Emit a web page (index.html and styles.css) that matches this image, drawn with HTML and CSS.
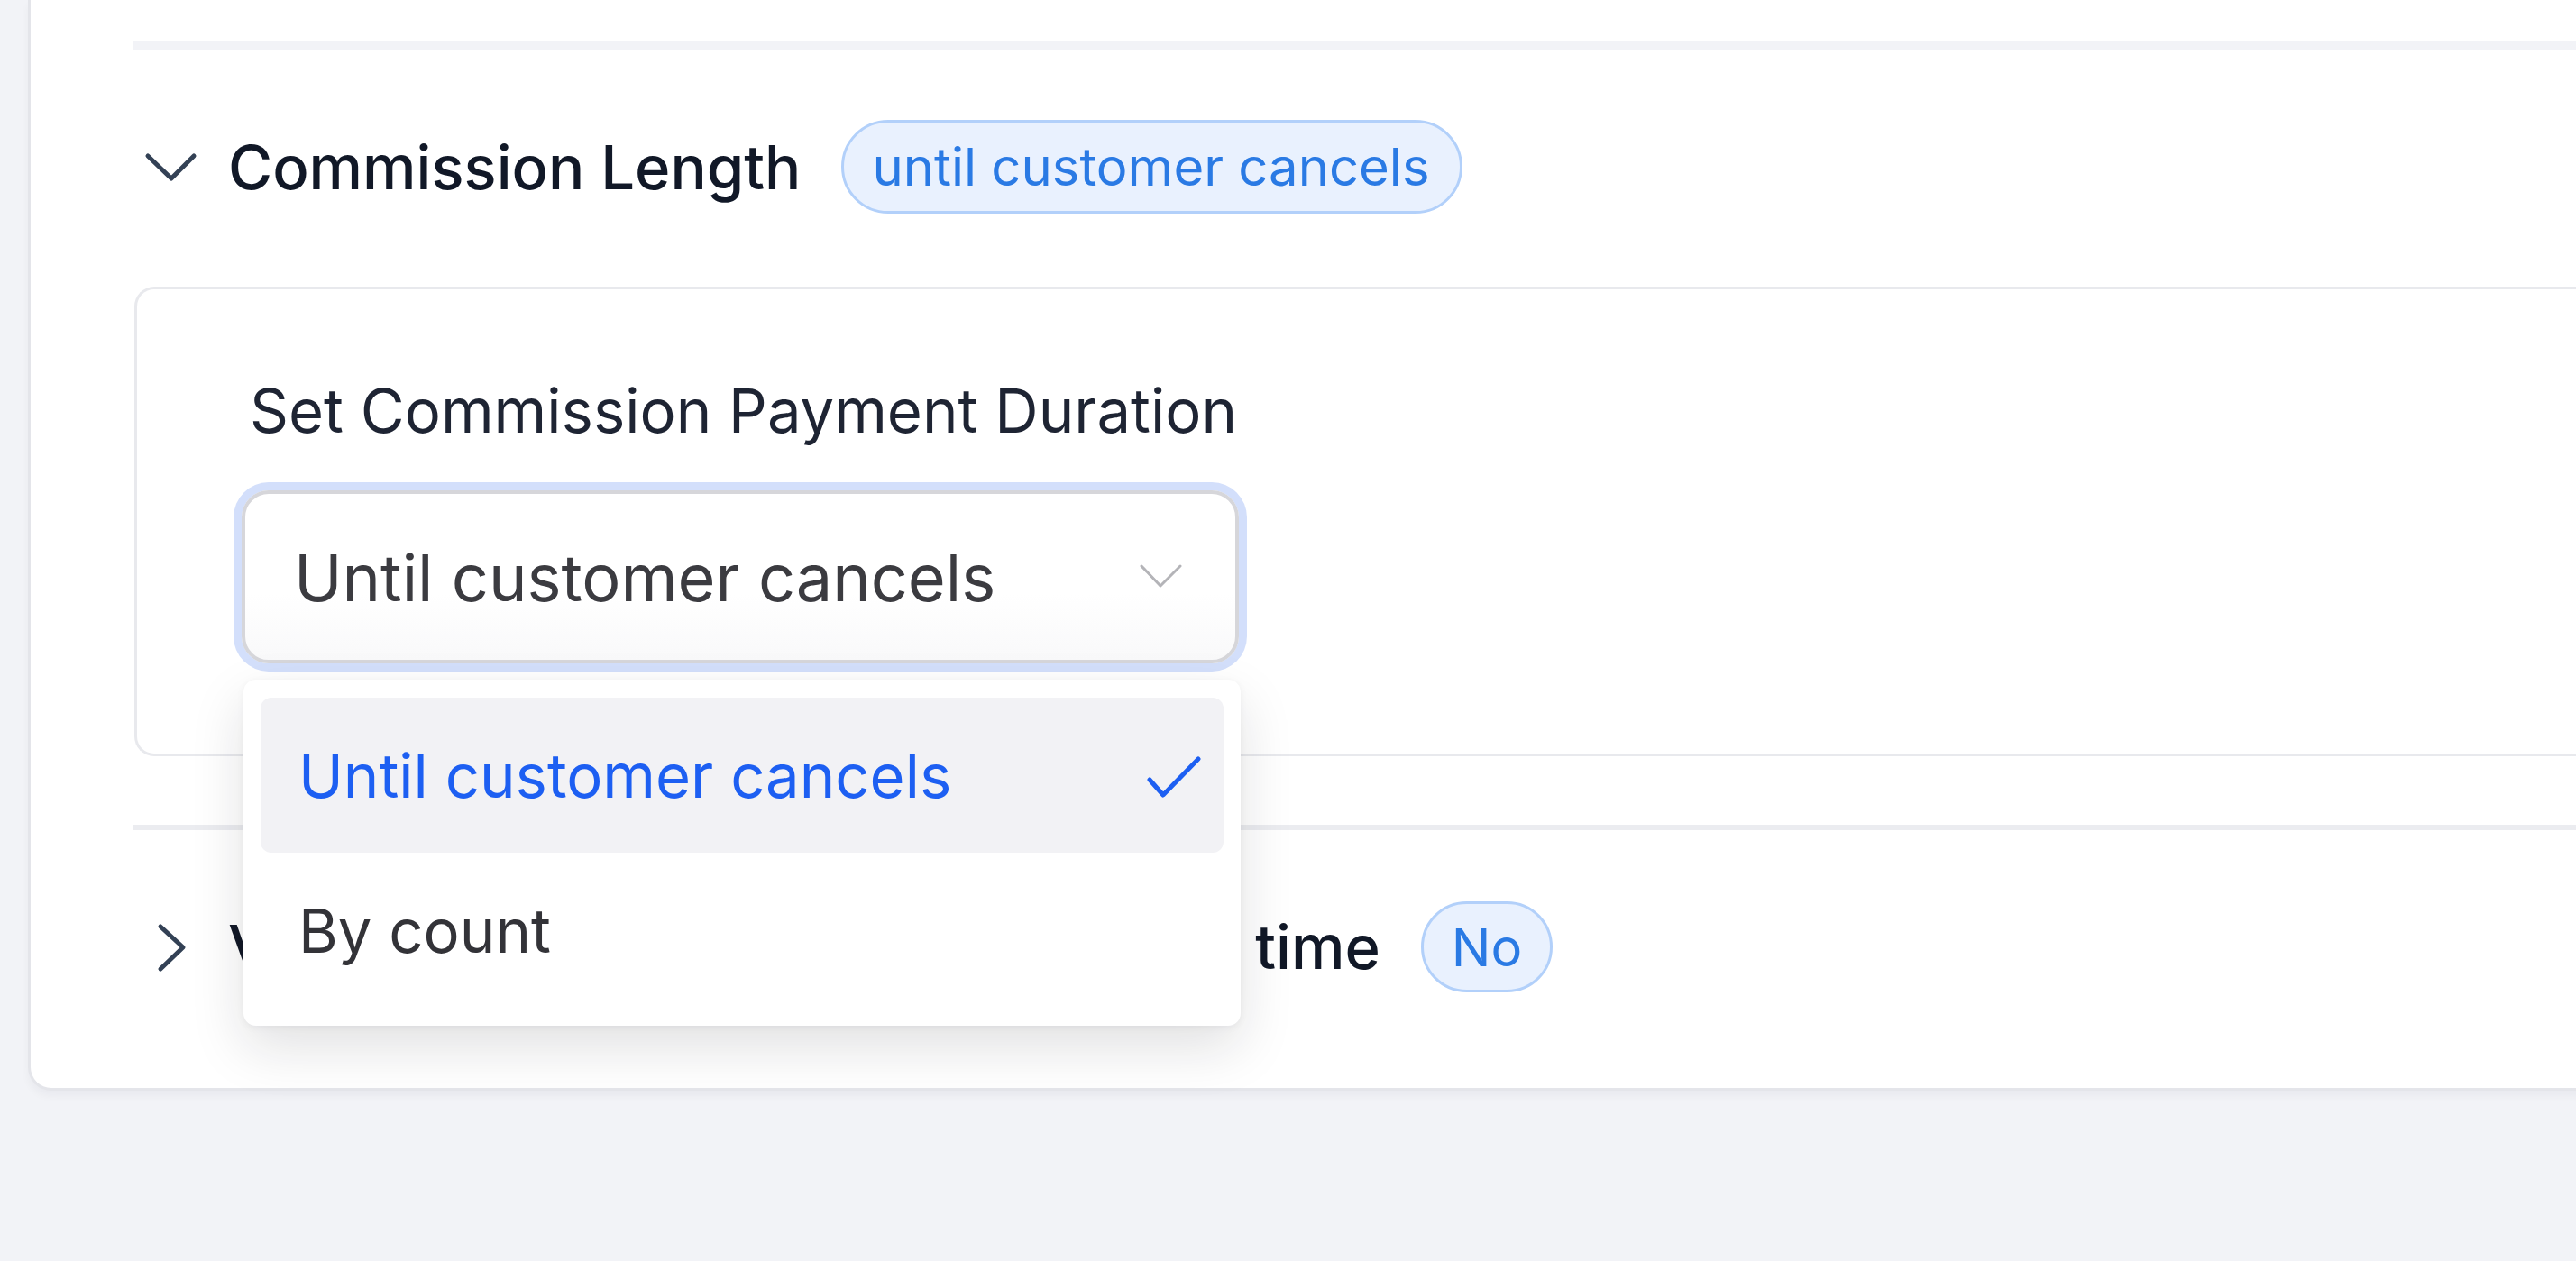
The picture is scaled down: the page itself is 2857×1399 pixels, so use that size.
FILE: index.html
```html
<!DOCTYPE html>
<html lang="en">
<head>
<meta charset="utf-8">
<title>Commission Length</title>
<link rel="stylesheet" href="styles.css">
</head>
<body>
<div class="page">
  <div class="card">
    <div class="divider divider-top"></div>

    <div class="row row-open">
      <span class="chev">
        <svg width="64" height="64" viewBox="0 0 64 64"><path d="M6 20 L32 45 L57 20" fill="none" stroke="#334155" stroke-width="5" stroke-linecap="round" stroke-linejoin="round"/></svg>
      </span>
      <span class="row-title">Commission Length</span>
      <span class="pill pill-long">until customer cancels</span>
    </div>

    <div class="panel">
      <div class="field-label">Set Commission Payment Duration</div>
      <div class="select-wrap">
        <div class="select">
          <span class="select-value">Until customer cancels</span>
          <svg class="select-chev" width="48" height="30" viewBox="0 0 48 30"><path d="M2 3 L23 25 L45 3" fill="none" stroke="#b4b4b8" stroke-width="3" stroke-linecap="round" stroke-linejoin="round"/></svg>
        </div>
        <div class="menu">
          <div class="menu-item selected">
            <span>Until customer cancels</span>
            <svg width="62" height="50" viewBox="0 0 62 50"><path d="M4 30 L19 47 L58 7" fill="none" stroke="#1d5ff2" stroke-width="5" stroke-linecap="round" stroke-linejoin="round"/></svg>
          </div>
          <div class="menu-item">
            <span>By count</span>
          </div>
        </div>
      </div>
    </div>

    <div class="divider divider-mid"></div>

    <div class="row row-closed">
      <span class="chev">
        <svg width="64" height="64" viewBox="0 0 64 64"><path d="M20 9 L45 32 L20 56" fill="none" stroke="#334155" stroke-width="5" stroke-linecap="round" stroke-linejoin="round"/></svg>
      </span>
      <span class="row-title">Vary commission percentage over <span class="title-tail">time</span></span>
      <span class="pill pill-short">No</span>
    </div>
  </div>
</div>
</body>
</html>
```

FILE: styles.css
```css
* { box-sizing: border-box; }

html, body {
  margin: 0;
  padding: 0;
}

body {
  background: #f2f3f7;
  font-family: Inter, "Noto Sans", "Liberation Sans", sans-serif;
  overflow: hidden;
  height: 1399px;
}

.page {
  padding-left: 31px;
}

.card {
  background: #ffffff;
  border-left: 3px solid #e4e5ea;
  border-bottom: 3px solid #e4e5ea;
  border-radius: 0 0 0 26px;
  margin-right: -80px;
  padding: 45px 0 106px 114px;
  box-shadow: 0 6px 10px rgba(20, 25, 40, 0.04);
}

.divider {
  background: #f2f3f7;
}

.divider-top {
  height: 10px;
}

.divider-mid {
  height: 6px;
  margin-top: 76px;
  background: #ebecf0;
}

.row {
  display: flex;
  align-items: center;
  height: 104px;
}

.row-open {
  margin-top: 78px;
}

.row-closed {
  margin-top: 79px;
  height: 101px;
}

.chev {
  width: 64px;
  height: 64px;
  display: flex;
  margin-left: 10px;
  margin-right: 31px;
}

.row-title {
  font-size: 67px;
  font-weight: 500;
  color: #111827;
  white-space: nowrap;
}

.title-tail {
  margin-left: 28px;
}

.pill {
  display: inline-flex;
  align-items: center;
  margin-left: 45px;
  background: #e9f1fe;
  border: 3px solid #b2d0fa;
  color: #2a7ae4;
  border-radius: 60px;
  font-size: 58px;
  white-space: nowrap;
}

.pill-long {
  height: 104px;
  padding: 0 33px 0 31px;
}

.pill-short {
  height: 101px;
  padding: 0 31px;
}

.panel {
  margin-top: 81px;
  margin-left: 1px;
  border: 3px solid #e8e9ed;
  border-right: none;
  border-radius: 22px 0 0 22px;
  padding: 95px 0 100px 125px;
  background: #ffffff;
}

.field-label {
  height: 80px;
  line-height: 80px;
  font-size: 67px;
  color: #1e2433;
  white-space: nowrap;
}

.select-wrap {
  position: relative;
  width: 1106px;
  margin-top: 48px;
  margin-left: -9px;
}

.select {
  height: 192px;
  border: 4px solid #d6d6da;
  border-radius: 30px;
  box-shadow: 0 0 0 9px #d3dffb;
  background: linear-gradient(#ffffff 60%, #f9f9fa);
  display: flex;
  align-items: center;
  justify-content: space-between;
  padding: 0 58px 0 54px;
}

.select-value {
  font-size: 72px;
  color: #3b3b40;
  white-space: nowrap;
}

.select-chev {
  display: block;
}

.menu {
  position: absolute;
  top: calc(100% + 18px);
  left: 2px;
  width: 1106px;
  background: #ffffff;
  border-radius: 14px;
  padding: 20px 19px;
  box-shadow: 0 24px 60px rgba(20, 20, 30, 0.13), 0 2px 8px rgba(20, 20, 30, 0.05);
}

.menu-item {
  height: 172px;
  border-radius: 12px;
  display: flex;
  align-items: center;
  justify-content: space-between;
  padding: 0 24px 0 42px;
  font-size: 67px;
  color: #333338;
  white-space: nowrap;
}

.menu-item.selected {
  background: #f2f2f5;
  color: #1d5ff2;
}
```
